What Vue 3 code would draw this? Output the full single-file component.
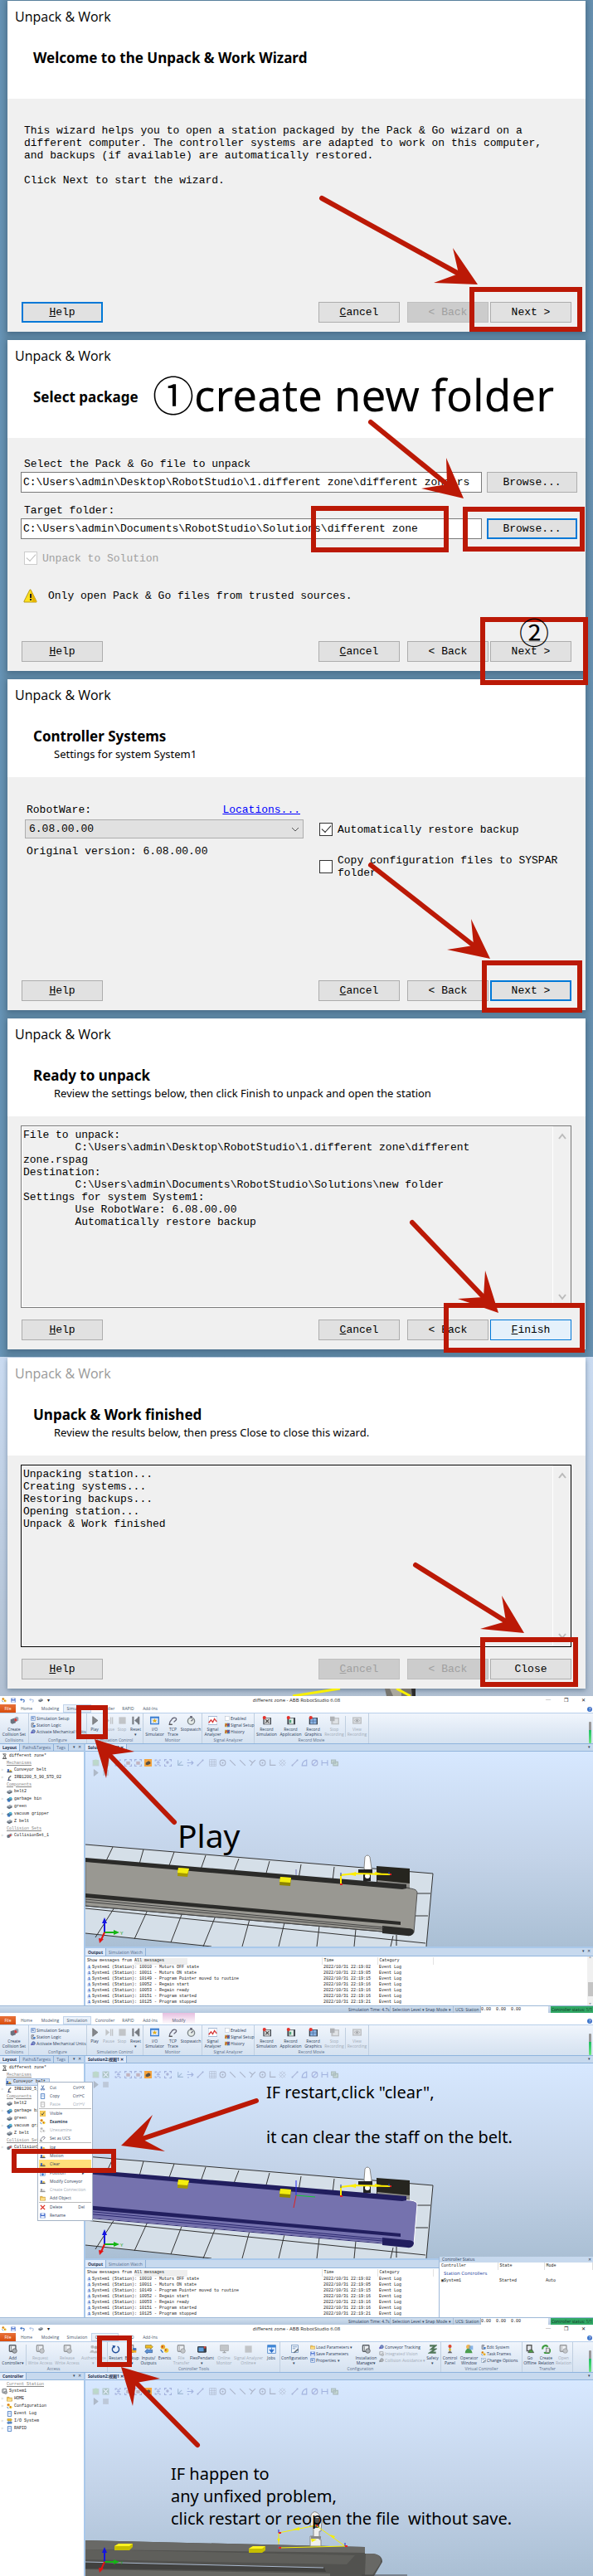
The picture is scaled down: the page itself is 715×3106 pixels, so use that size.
<script setup>
const red = '#bb1906'

const wizards = [
  {
    id: 'welcome', title: 'Welcome to the Unpack & Work Wizard', help: 'focus',
    buttons: [['C', 'ancel', ''], ['', '< Back', 'off'], ['', 'Next >', '']],
    boxes: [[566, 346, 702, 400]],
    arrows: [[[388, 239], [576, 343], [546, 299], [523, 341]]]
  },
  {
    id: 'package', title: 'Select package',
    buttons: [['C', 'ancel', ''], ['', '< Back', ''], ['', 'Next >', '']],
    boxes: [[375, 201, 541, 257], [558, 202, 705, 256], [579, 335, 709, 417]],
    arrows: [[[447, 100], [559, 192], [538, 143], [508, 180]]]
  },
  {
    id: 'systems', title: 'Controller Systems', sub: 'Settings for system System1',
    buttons: [['C', 'ancel', ''], ['', '< Back', ''], ['', 'Next >', 'focus']],
    boxes: [[581, 340, 702, 403]],
    arrows: [[[447, 225], [591, 338], [568, 290], [539, 327]]]
  },
  {
    id: 'ready', title: 'Ready to unpack', sub: 'Review the settings below, then click Finish to unpack and open the station',
    log: 'File to unpack:\n        C:\\Users\\admin\\Desktop\\RobotStudio\\1.different zone\\different\nzone.rspag\nDestination:\n        C:\\Users\\admin\\Documents\\RobotStudio\\Solutions\\new folder\nSettings for system System1:\n        Use RobotWare: 6.08.00.00\n        Automatically restore backup',
    buttons: [['C', 'ancel', ''], ['', '< Back', ''], ['F', 'inish', 'hot']],
    boxes: [[535, 344, 705, 404]],
    arrows: [[[497, 247], [601, 356], [585, 305], [552, 339]]]
  },
  {
    id: 'done', title: 'Unpack & Work finished', sub: 'Review the results below, then press Close to close this wizard.',
    log: 'Unpacking station...\nCreating systems...\nRestoring backups...\nOpening station...\nUnpack & Work finished',
    buttons: [['C', 'ancel', 'off'], ['', '< Back', 'off'], ['', 'Close', '']],
    boxes: [[579, 338, 697, 398]],
    arrows: [[[501, 251], [632, 333], [605, 288], [579, 328]]]
  }
]

// Head polygon: tip, first barb, notch behind the tip, second barb.
function head([tail, tip, b1, b2]) {
  const n = notch([tail, tip, b1, b2])
  return [tip, b1, n, b2].map(p => p.join(',')).join(' ')
}
function notch([tail, tip]) {
  const dx = tail[0] - tip[0], dy = tail[1] - tip[1]
  const len = Math.hypot(dx, dy)
  return [Math.round(tip[0] + dx / len * 26), Math.round(tip[1] + dy / len * 26)]
}

const simRibbon = [
  { name: 'Collisions', items: [{ w: 34, i: 'collide', t: 'Create\nCollision Set' }] },
  { name: 'Configure', items: [{ w: 69, list: [['setup', 'Simulation Setup'], ['logic', 'Station Logic'], ['mech', 'Activate Mechanical Units']] }] },
  { name: 'Simulation Control', items: [{ w: 18, i: 'play', t: 'Play' }, { w: 16, i: 'pause', t: 'Pause', off: 1 }, { w: 16, i: 'stop', t: 'Stop', off: 1 }, { w: 17, i: 'reset', t: 'Reset\n▾' }] },
  { name: 'Monitor', items: [{ w: 27, i: 'io', t: 'I/O\nSimulator' }, { w: 17, i: 'trace', t: 'TCP\nTrace' }, { w: 26, i: 'watch', t: 'Stopwatch' }] },
  { name: 'Signal Analyzer', items: [{ w: 25, i: 'chart', t: 'Signal\nAnalyzer' }, { w: 37, list: [['check', 'Enabled'], ['sig', 'Signal Setup'], ['sig', 'History']] }] },
  { name: 'Record Movie', items: [{ w: 29, i: 'rec', t: 'Record\nSimulation' }, { w: 29, i: 'recapp', t: 'Record\nApplication' }, { w: 25, i: 'recgfx', t: 'Record\nGraphics' }, { w: 26, i: 'recstop', t: 'Stop\nRecording', off: 1 }, { w: 28, i: 'view', t: 'View\nRecording', off: 1, div: 1 }] }
]
const ctlRibbon = [
  { name: 'Access', items: [{ w: 31, i: 'cab', t: 'Add\nController▾' }, { w: 34, i: 'cab', t: 'Request\nWrite Access', off: 1, div: 1 }, { w: 32, i: 'cab', t: 'Release\nWrite Access', off: 1 }, { w: 32, i: 'people', t: 'Authenticate\n▾', off: 1 }] },
  { name: 'Controller Tools', items: [{ w: 19, i: 'restart', t: 'Restart\n▾' }, { w: 20, i: 'backup', t: 'Backup\n▾' }, { w: 20, i: 'inout', t: 'Inputs/\nOutputs' }, { w: 19, i: 'event', t: 'Events' }, { w: 21, i: 'cab', t: 'File\nTransfer', off: 1 }, { w: 29, i: 'pendant', t: 'FlexPendant\n▾' }, { w: 24, i: 'screen', t: 'Online\nMonitor', off: 1 }, { w: 35, i: 'stop', t: 'Signal Analyzer\nOnline▾', off: 1 }, { w: 20, i: 'jobs', t: 'Jobs' }] },
  { name: 'Configuration', items: [{ w: 34, i: 'config', t: 'Configuration\n▾' }, { w: 56, list: [['folder', 'Load Parameters ▾'], ['save', 'Save Parameters'], ['setup', 'Properties ▾']] }, { w: 27, i: 'cab', t: 'Installation\nManager▾' }, { w: 57, list: [['mech', 'Conveyor Tracking'], ['cab', 'Integrated Vision', 1], ['mech', 'Collision Avoidance ▾', 1]] }, { w: 19, i: 'safety', t: 'Safety\n▾' }] },
  { name: 'Virtual Controller', items: [{ w: 21, i: 'light', t: 'Control\nPanel' }, { w: 25, i: 'person', t: 'Operator\nWindow' }, { w: 51, list: [['logic', 'Edit System'], ['event', 'Task Frames'], ['config', 'Change Options']] }] },
  { name: 'Transfer', items: [{ w: 18, i: 'offline', t: 'Go\nOffline' }, { w: 21, i: 'relation', t: 'Create\nRelation' }, { w: 21, i: 'cab', t: 'Open\nRelation', off: 1 }] }
]

const stationTree = [
  ['root', 'station', 'different zone*'], ['head', '', 'Mechanisms'],
  ['open', 'belt', 'Conveyor belt'], ['open', 'robot', 'IRB1200_5_90_STD_02'],
  ['head', '', 'Components'], ['leaf', 'part', 'belt2'], ['open', 'group', 'garbage bin'],
  ['leaf', 'part', 'green'], ['open', 'group', 'vacuum gripper'], ['leaf', 'part', 'Z belt'],
  ['head', '', 'Collision Sets'], ['open', 'collide', 'CollisionSet_1']
]
const controllerTree = [
  ['head', '', 'Current Station'], ['root', 'cab', 'System1'], ['open', 'folder', 'HOME'],
  ['open', 'event', 'Configuration'], ['leaf', 'page', 'Event Log'], ['open', 'inout', 'I/O System'], ['open', 'page', 'RAPID']
]

const tabs = ['Home', 'Modeling', 'Simulation', 'Controller', 'RAPID', 'Add-Ins']
const frames = [
  {
    id: 'play', title: true, active: 'Simulation', ribbon: simRibbon, tree: stationTree, dock: ['Layout', 'Paths&Targets', 'Tags'], scene: 'grey',
    boxes: [[92, 11, 130, 52]], arrows: [[[210, 152], [114, 52], [128, 99], [162, 67]]], h: 382
  },
  {
    id: 'clear', title: false, active: 'Simulation', modify: true, ribbon: simRibbon, tree: stationTree, dock: ['Layout', 'Paths&Targets', 'Tags'], scene: 'blue', menu: true, status: true,
    boxes: [[14, 164, 140, 193]], arrows: [[[309, 106], [146, 160], [184, 123], [199, 167]]], h: 376
  },
  {
    id: 'restart', title: true, active: 'Controller', ribbon: ctlRibbon, tree: controllerTree, dock: ['Controller'], scene: 'near',
    boxes: [[117, 13, 159, 51]], arrows: [[[238, 145], [146, 51], [160, 98], [193, 65]]], h: 303
  }
]

const log = [
  ['10010 - Motors OFF state', '02'], ['10011 - Motors ON state', '05'], ['10149 - Program Pointer moved to routine', '15'],
  ['10052 - Regain start', '16'], ['10053 - Regain ready', '16'], ['10151 - Program started', '16'], ['10125 - Program stopped', '21']
]
const menu = [
  ['Cut', 'Ctrl+X', 'cut'], ['Copy', 'Ctrl+C', 'page'], ['Paste', 'Ctrl+V', 'page', 'off'], null,
  ['Visible', '', 'tick'], ['Examine', '', 'event', 'bold'], ['Unexamine', '', 'event', 'off'], ['Set as UCS', '', 'trace'], null,
  ['Jog', '', 'belt'], ['Motion', '', 'belt'], ['Clear', '', 'belt', 'hot'], null,
  ['Position', '▸', 'jobs'], ['Modify Conveyor', '', 'belt'], ['Create Connection', '', 'belt', 'off'], ['Add Object', '', 'folder'], null,
  ['Delete', 'Del', 'del'], ['Rename', '', 'save']
]
const tools = [
  ['sphere', 'fit'], ['sel', 'selred', 'selred', 'orange', 'sel', 'selblue'], ['axes', 'arrow', 'diag'],
  ['grid', 'target', 'slash', 'slash', 'yy', 'target', 'corner', 'cross'], ['diag', 'arc', 'nosign', 'width', 'cards']
]
const gridTop = [[33, 115, 20, 142], [70, 118, 62, 146], [107, 121, 100, 140], [145, 125, 138, 145], [185, 129, 178, 147], [222, 132, 217, 150], [260, 136, 257, 153], [300, 139, 298, 156]]
const gridLow = [[35, 188, 12, 224], [75, 191, 59, 226], [117, 194, 103, 230], [157, 198, 142, 235], [198, 202, 189, 235], [240, 206, 233, 235], [282, 210, 279, 235], [326, 214, 324, 235], [371, 222, 368, 235]]
</script>

<template>
  <main class="guide">
    <svg class="defs" aria-hidden="true">
      <symbol id="i-collide" viewBox="0 0 16 16"><path d="M1 6l6-2 3 2v6l-6 2-3-2z" fill="#6b7480" /><path d="M8 3l4-2 3 2v5l-4 2-3-2z" fill="#9aa7b5" /><path d="M8 4l4 1v4l-4 0z" fill="#d83a3a" /></symbol>
      <symbol id="i-setup" viewBox="0 0 16 16"><rect x="1" y="1" width="14" height="14" fill="#5b86cc" /><rect x="3" y="4" width="10" height="9" fill="#fff" /><path d="M4 6h5M4 9h7" stroke="#335ca5" stroke-width="2" /></symbol>
      <symbol id="i-logic" viewBox="0 0 16 16"><path d="M3 2h7l-3 5 5 7H3z" fill="#dfe4ea" stroke="#556" stroke-width="2" /><rect x="9" y="8" width="6" height="6" fill="#3f7bd0" /></symbol>
      <symbol id="i-mech" viewBox="0 0 16 16"><circle cx="9" cy="7" r="5" fill="#8397c8" stroke="#3850a0" stroke-width="2" /><path d="M1 14V7l7 4z" fill="#5343b6" /></symbol>
      <symbol id="i-play" viewBox="0 0 16 16"><path d="M4 1l9 7-9 7z" fill="#85888d" stroke="#666" /></symbol>
      <symbol id="i-pause" viewBox="0 0 16 16"><path d="M2 2l7 6-7 6z" fill="#a4a8ae" /><path d="M10 2h2v12h-2zM13 2h2v12h-2z" fill="#a4a8ae" /></symbol>
      <symbol id="i-stop" viewBox="0 0 16 16"><rect x="2" y="2" width="12" height="12" fill="#a3a8b0" /></symbol>
      <symbol id="i-reset" viewBox="0 0 16 16"><path d="M2 1h3v14H2zM14 1v14L6 8zM12 1h3v14h-3z" fill="#777b82" /></symbol>
      <symbol id="i-io" viewBox="0 0 16 16"><rect y="1" width="16" height="14" fill="#3c7ed0" /><rect x="2" y="4" width="12" height="9" fill="#dceaff" /><path d="M8 4l1 3h3l-2 2 1 3-3-2-3 2 1-3-2-2h3z" fill="#e3b01b" /></symbol>
      <symbol id="i-trace" viewBox="0 0 16 16"><path d="M2 15c0-8 3-6 4-9s7-4 8-1-4 4-4 6" fill="none" stroke="#667" stroke-width="2" /><path d="M1 15h6" stroke="#555" stroke-width="2" /></symbol>
      <symbol id="i-watch" viewBox="0 0 16 16"><circle cx="8" cy="9" r="6" fill="#e5ebe8" stroke="#7c8588" stroke-width="2" /><path d="M6 1h4M8 1v3M8 9l3-3" stroke="#667" stroke-width="2" /></symbol>
      <symbol id="i-chart" viewBox="0 0 16 16"><rect y="1" width="16" height="14" fill="#fff" stroke="#7f9cc3" /><path d="M1 12l4-5 3 4 3-6 4 5" fill="none" stroke="#d63a3a" stroke-width="2" /></symbol>
      <symbol id="i-check" viewBox="0 0 16 16"><rect x="1" y="1" width="14" height="14" fill="#fff" stroke="#9aa8ba" /></symbol>
      <symbol id="i-sig" viewBox="0 0 16 16"><rect y="2" width="10" height="12" fill="#c3a94c" /><rect x="8" y="2" width="8" height="12" fill="#477bbd" /><path d="M1 12l5-8 4 6 4-7" fill="none" stroke="#c22" stroke-width="2" /></symbol>
      <symbol id="i-rec" viewBox="0 0 16 16"><rect x="2" y="3" width="14" height="12" fill="#444a52" /><rect x="4" y="4" width="10" height="10" fill="#e5e5e5" /><path d="M6 12l6-6M6 6l6 6" stroke="#555" stroke-width="2" /><circle cx="4" cy="3" r="3" fill="#e4312b" /></symbol>
      <symbol id="i-recapp" viewBox="0 0 16 16"><rect x="2" y="3" width="14" height="12" fill="#444a52" /><rect x="5" y="4" width="8" height="10" fill="#dfece7" /><path d="M6 7h3v5H6z" fill="#48a277" /><circle cx="4" cy="3" r="3" fill="#e4312b" /></symbol>
      <symbol id="i-recgfx" viewBox="0 0 16 16"><rect x="1" y="3" width="15" height="12" fill="#37404c" /><rect x="3" y="4" width="11" height="10" fill="#8ab3e4" /><path d="M3 9h11M8 4v10" stroke="#496a99" /><circle cx="4" cy="3" r="3" fill="#e4312b" /></symbol>
      <symbol id="i-recstop" viewBox="0 0 16 16"><rect x="2" y="3" width="14" height="12" fill="#9fa4ab" /><rect x="5" y="5" width="9" height="8" fill="#d8dce0" /><rect y="1" width="8" height="8" fill="#858a91" /></symbol>
      <symbol id="i-view" viewBox="0 0 16 16"><rect y="2" width="16" height="12" fill="#9da2a9" /><rect x="2" y="4" width="12" height="8" fill="#d3d7dc" /><path d="M3 8q5-5 10 0q-5 5-10 0" fill="none" stroke="#70757b" /><circle cx="8" cy="8" r="2" fill="#70757b" /></symbol>
      <symbol id="i-cab" viewBox="0 0 16 16"><rect x="2" y="1" width="11" height="11" rx="1" fill="#eceff2" stroke="#5b6168" stroke-width="2" /><path d="M5 3v8" stroke="#5b6168" /><circle cx="11" cy="11" r="4" fill="#a7adb3" stroke="#555" /></symbol>
      <symbol id="i-people" viewBox="0 0 16 16"><circle cx="5" cy="4" r="3" fill="#999" /><circle cx="11" cy="5" r="3" fill="#888" /><path d="M0 14q5-9 9 0zM7 15q4-9 9 0z" fill="#999" /></symbol>
      <symbol id="i-restart" viewBox="0 0 16 16"><path d="M5 3a6 6 0 1 0 6 0" fill="none" stroke="#24509b" stroke-width="2" /><path d="M2 1l6 1-3 5z" fill="#24509b" /></symbol>
      <symbol id="i-backup" viewBox="0 0 16 16"><rect x="1" y="1" width="9" height="13" fill="#d9dde2" stroke="#555" /><path d="M7 8h8v6H7z" fill="#eea725" /><path d="M9 6h6v4H9z" fill="#3d73c2" /></symbol>
      <symbol id="i-inout" viewBox="0 0 16 16"><path d="M2 1h9V0l4 4-4 4V6H2z" fill="#f0bd25" stroke="#8c7324" /><path d="M14 9H5V8l-4 4 4 4v-2h9z" fill="#5d92d6" stroke="#375d96" /></symbol>
      <symbol id="i-event" viewBox="0 0 16 16"><circle cx="5" cy="4" r="4" fill="#ecae2c" /><circle cx="11" cy="10" r="4" fill="#f1cb35" /><path d="M4 2v3M10 8v3" stroke="#b32222" stroke-width="2" /><path d="M1 9l4 5" stroke="#316cb2" stroke-width="2" /></symbol>
      <symbol id="i-pendant" viewBox="0 0 16 16"><rect y="3" width="16" height="11" rx="2" fill="#39414a" /><rect x="2" y="5" width="9" height="7" fill="#5b9ddd" /><circle cx="13" cy="5" r="2" fill="#d3483c" /></symbol>
      <symbol id="i-screen" viewBox="0 0 16 16"><rect x="1" y="1" width="14" height="10" fill="#a4a9af" stroke="#777" /><path d="M5 14h6M8 11v3" stroke="#777" stroke-width="2" /></symbol>
      <symbol id="i-jobs" viewBox="0 0 16 16"><rect x="1" y="1" width="14" height="14" fill="#e3efff" stroke="#3675c0" /><path d="M1 1h14v4H1z" fill="#3e86d8" /><path d="M8 5v6M4 9l4 5 4-5z" fill="#2e70c7" stroke="#2e70c7" /></symbol>
      <symbol id="i-config" viewBox="0 0 16 16"><rect x="2" y="1" width="12" height="13" fill="#f3f7fb" stroke="#5f84b5" /><path d="M4 4h8M4 7h5" stroke="#4d78b1" /><path d="M5 14l8-7 2 2-8 6z" fill="#68747f" /></symbol>
      <symbol id="i-folder" viewBox="0 0 16 16"><path d="M1 3h6l1 2h7v9H1z" fill="#efbd47" stroke="#a97e21" /><path d="M3 7h12l-2 7H2z" fill="#fbdc85" /></symbol>
      <symbol id="i-save" viewBox="0 0 16 16"><rect x="1" y="1" width="14" height="14" rx="1" fill="#4169c8" /><path d="M4 1h8v5H4zM3 9h10v6H3z" fill="#eaf1ff" /></symbol>
      <symbol id="i-safety" viewBox="0 0 16 16"><path d="M3 2h10L6 8h7L4 14h10" fill="none" stroke="#52775a" stroke-width="3" /></symbol>
      <symbol id="i-light" viewBox="0 0 16 16"><circle cx="8" cy="3" r="3" fill="#e0452c" /><path d="M7 5h2v7H7z" fill="#777" /><circle cx="8" cy="9" r="2" fill="#e8c62c" /><path d="M4 15h8l-2-3H6z" fill="#666" /></symbol>
      <symbol id="i-person" viewBox="0 0 16 16"><circle cx="7" cy="4" r="4" fill="#efb552" /><path d="M1 15q1-8 6-8t7 8z" fill="#4b9d4d" /><rect x="8" y="2" width="7" height="7" fill="#5e9be0" opacity=".7" /></symbol>
      <symbol id="i-offline" viewBox="0 0 16 16"><rect x="2" y="1" width="8" height="10" fill="#e2e5e9" stroke="#555" stroke-width="2" /><path d="M4 14h10l-3-5H7z" fill="#4c9c45" stroke="#444" /></symbol>
      <symbol id="i-relation" viewBox="0 0 16 16"><path d="M2 8a5 5 0 0 1 9-4M14 8a5 5 0 0 1-9 5" fill="none" stroke="#3c9a3b" stroke-width="3" /><rect x="8" y="6" width="6" height="8" fill="#ddd" stroke="#666" /></symbol>
      <symbol id="i-station" viewBox="0 0 16 16"><path d="M3 2h9M5 2l3 5-4 7h8L9 7l3-4M2 15h12" fill="none" stroke="#555" stroke-width="2" /></symbol>
      <symbol id="i-belt" viewBox="0 0 16 16"><path d="M1 11h14v3H1z" fill="#47505f" /><path d="M2 5h5v6H2z" fill="#3a63ba" /><path d="M8 7h5v4H8z" fill="#e0b12c" /></symbol>
      <symbol id="i-robot" viewBox="0 0 16 16"><path d="M3 15h9M6 14V8l6-5" fill="none" stroke="#666" stroke-width="3" /><path d="M4 12h3v3H4z" fill="#334fb0" /></symbol>
      <symbol id="i-part" viewBox="0 0 16 16"><path d="M1 7l8-4 6 2v5l-8 4-6-3z" fill="#66707c" /><path d="M1 7l8-4 6 2-8 4z" fill="#a9b2bc" /></symbol>
      <symbol id="i-group" viewBox="0 0 16 16"><path d="M1 7l8-4 6 2v5l-8 4-6-3z" fill="#4f7391" /><path d="M7 2h7v6H7z" fill="#54b6d5" /><path d="M3 9h6v6H3z" fill="#3a77c2" /></symbol>
      <symbol id="i-page" viewBox="0 0 16 16"><path d="M3 1h10v14H3z" fill="#eaf2ff" stroke="#4e7fc2" stroke-width="2" /><path d="M5 5h6M5 8h6" stroke="#87a6d0" /></symbol>
      <symbol id="i-cut" viewBox="0 0 16 16"><path d="M5 1l4 9M11 1l-4 9" stroke="#456aa9" stroke-width="2" /><circle cx="5" cy="12" r="2" fill="none" stroke="#456aa9" stroke-width="2" /><circle cx="11" cy="12" r="2" fill="none" stroke="#456aa9" stroke-width="2" /></symbol>
      <symbol id="i-tick" viewBox="0 0 16 16"><rect width="16" height="16" fill="#fcd364" stroke="#dba52f" /><path d="M4 8l3 4 5-8" fill="none" stroke="#443" stroke-width="2" /></symbol>
      <symbol id="i-del" viewBox="0 0 16 16"><path d="M2 2l12 12M14 2L2 14" stroke="#dc2a1e" stroke-width="3" /></symbol>
      <symbol id="i-sphere" viewBox="0 0 16 16"><rect x="1" y="2" width="14" height="13" fill="#aab4a8" /><circle cx="8" cy="7" r="6" fill="#9fc98f" /></symbol>
      <symbol id="i-fit" viewBox="0 0 16 16"><rect x="1" y="1" width="14" height="14" fill="#7b9b80" /><path d="M3 3l10 10M13 3L3 13" stroke="#fff" stroke-width="2" /></symbol>
      <symbol id="i-sel" viewBox="0 0 16 16"><path d="M2 5V2h4M10 2h4M2 11v3h4M10 14h4M5 8h7M6 5h5M6 11h5" fill="none" stroke="#6872b8" stroke-width="2" /></symbol>
      <symbol id="i-selred" viewBox="0 0 16 16"><path d="M1 5V1h4M11 1h4v4M1 11v4h4M11 15h4v-4" fill="none" stroke="#6872b8" stroke-width="2" /><path d="M4 5h8v7H4z" fill="#a77" /></symbol>
      <symbol id="i-selblue" viewBox="0 0 16 16"><path d="M1 5V1h4M11 1h4v4M1 11v4h4M11 15h4v-4" fill="none" stroke="#6872b8" stroke-width="2" /><circle cx="7" cy="7" r="3" fill="#77a" /></symbol>
      <symbol id="i-orange" viewBox="0 0 16 16"><rect width="16" height="16" fill="#f5a33c" /><path d="M3 8l6-4 4 2v4l-6 3-4-1z" fill="#5a5145" /></symbol>
      <symbol id="i-axes" viewBox="0 0 16 16"><path d="M3 2v11h11M3 13l8-8" fill="none" stroke="#68a" stroke-width="2" /></symbol>
      <symbol id="i-arrow" viewBox="0 0 16 16"><path d="M1 8h13M10 4l4 4-4 4M2 2h3M2 14h3" fill="none" stroke="#67b" stroke-width="2" /></symbol>
      <symbol id="i-diag" viewBox="0 0 16 16"><path d="M2 14L14 2" stroke="#77a" stroke-width="2" /><path d="M1 12h3v3H1zM12 1h3v3h-3z" fill="#67a" /></symbol>
      <symbol id="i-grid" viewBox="0 0 16 16"><path d="M1 1h14v14H1zM6 1v14M11 1v14M1 6h14M1 11h14" fill="none" stroke="#778" stroke-width="1" /></symbol>
      <symbol id="i-target" viewBox="0 0 16 16"><circle cx="8" cy="8" r="6" fill="none" stroke="#778" stroke-width="2" /><circle cx="8" cy="8" r="2" fill="#778" /></symbol>
      <symbol id="i-slash" viewBox="0 0 16 16"><path d="M2 2l12 12" stroke="#778" stroke-width="2" /></symbol>
      <symbol id="i-yy" viewBox="0 0 16 16"><path d="M1 2l7 6 6-6M8 8l-4 6" fill="none" stroke="#778" stroke-width="2" /></symbol>
      <symbol id="i-corner" viewBox="0 0 16 16"><path d="M3 1v12h12" fill="none" stroke="#778" stroke-width="2" /></symbol>
      <symbol id="i-cross" viewBox="0 0 16 16"><path d="M2 2l12 12M14 2L2 14M8 1l7 7-7 7-7-7z" fill="none" stroke="#778" stroke-width="1" /></symbol>
      <symbol id="i-arc" viewBox="0 0 16 16"><path d="M2 14Q3 4 12 2v12z" fill="none" stroke="#67b" stroke-width="2" /></symbol>
      <symbol id="i-nosign" viewBox="0 0 16 16"><circle cx="8" cy="8" r="6" fill="none" stroke="#77a" stroke-width="2" /><path d="M3 13L13 3" stroke="#67c" stroke-width="2" /></symbol>
      <symbol id="i-width" viewBox="0 0 16 16"><path d="M2 2v12M14 2v12M2 8h12" stroke="#67b" stroke-width="2" /></symbol>
      <symbol id="i-cards" viewBox="0 0 16 16"><path d="M1 2h9v7H1zM5 6h10v8H5z" fill="#b7cba6" stroke="#7a8b76" stroke-width="2" /></symbol>
      <symbol id="i-undo" viewBox="0 0 16 16"><path d="M4 6h6q4 0 4 4t-4 4" fill="none" stroke="#3c6fc0" stroke-width="3" /><path d="M0 6l6-5v10z" fill="#3c6fc0" /></symbol>
    </svg>

    <section v-for="w in wizards" :key="w.id" class="stage" :class="'stage-' + w.id">
      <div class="window">
        <header class="head">
          <p class="caption">Unpack &amp; Work</p>
          <h2>{{ w.title }}</h2>
          <p v-if="w.sub" class="sub">{{ w.sub }}</p>
        </header>
        <div class="body">
          <div v-if="w.id === 'welcome'" class="intro">
            <p>This wizard helps you to open a station packaged by the Pack &amp; Go wizard on a<br>different computer. The controller systems are adapted to work on this computer,<br>and backups (if available) are automatically restored.</p>
            <p>Click Next to start the wizard.</p>
          </div>

          <div v-else-if="w.id === 'package'" class="pick">
            <label for="src">Select the Pack &amp; Go file to unpack</label>
            <div class="row">
              <input id="src" type="text" value="C:\Users\admin\Desktop\RobotStudio\1.different zone\different zone.rs">
              <button type="button" class="btn">Browse...</button>
            </div>
            <label for="dst">Target folder:</label>
            <div class="row">
              <input id="dst" type="text" value="C:\Users\admin\Documents\RobotStudio\Solutions\different zone">
              <button type="button" class="btn focus">Browse...</button>
            </div>
            <label class="tick off"><input type="checkbox" checked disabled>Unpack to Solution</label>
            <p class="warn">
              <svg viewBox="0 0 17 17" width="17" height="17" aria-hidden="true"><path d="M8 1h1l7 14v1H1v-1z" fill="#ffe11c" stroke="#b59a1c" stroke-linejoin="round" /><path d="M9 1l7 14v1h-5z" fill="#e6b400" /><path d="M8 6h2v5H8zM8 12h2v2H8z" fill="#222" /></svg>
              Only open Pack &amp; Go files from trusted sources.
            </p>
          </div>

          <div v-else-if="w.id === 'systems'" class="systems">
            <div class="left">
              <div class="line"><label for="rw">RobotWare:</label><a href="#">Locations...</a></div>
              <div class="select">
                <select id="rw"><option>6.08.00.00</option></select>
                <svg viewBox="0 0 10 6" width="10" height="6" aria-hidden="true"><path d="M1 1l4 4 4-4" fill="none" stroke="#555" /></svg>
              </div>
              <p>Original version: 6.08.00.00</p>
            </div>
            <div class="right">
              <label class="tick"><input type="checkbox" checked>Automatically restore backup</label>
              <label class="tick"><input type="checkbox"><span>Copy configuration files to SYSPAR<br>folder</span></label>
            </div>
          </div>

          <div v-else class="log" :class="{ dark: w.id === 'done' }">
            <textarea readonly :value="w.log" :aria-label="w.title"></textarea>
            <div class="bar">
              <svg viewBox="0 0 10 8" width="10" height="8" aria-hidden="true"><path d="M1 7l4-5 4 5" fill="none" stroke="#bbb" stroke-width="2" /></svg>
              <svg viewBox="0 0 10 8" width="10" height="8" aria-hidden="true"><path d="M1 1l4 5 4-5" fill="none" stroke="#bbb" stroke-width="2" /></svg>
            </div>
          </div>

          <footer class="actions">
            <button type="button" class="btn help" :class="w.help"><u>H</u>elp</button>
            <button v-for="b in w.buttons" :key="b[1]" type="button" class="btn" :class="b[2]" :disabled="b[2] === 'off'"><u>{{ b[0] }}</u>{{ b[1] }}</button>
          </footer>
        </div>
      </div>
      <svg v-if="w.id === 'done'" class="peek" viewBox="0 0 715 9" preserveAspectRatio="none" aria-hidden="true">
        <path d="M464 0h37v9h-35z" fill="#77756f" /><path d="M496 0h5v9h-4z" fill="#2b2b2b" /><path d="M470 0h14v9h-10z" fill="#aaa89f" />
        <path d="M410 0l-57 9M478 0l17 9" stroke="#f8f000" stroke-width="3" />
      </svg>
      <svg class="marks" viewBox="0 0 715 409" preserveAspectRatio="none" aria-hidden="true">
        <rect v-for="b in w.boxes" :key="b[0]" :x="b[0] + 3" :y="b[1] + 3" :width="b[2] - b[0] - 6" :height="b[3] - b[1] - 6" fill="none" :stroke="red" stroke-width="6" />
        <g v-for="a in w.arrows" :key="a[0][0]">
          <line :x1="a[0][0]" :y1="a[0][1]" :x2="notch(a)[0]" :y2="notch(a)[1]" :stroke="red" stroke-width="6" stroke-linecap="round" />
          <polygon :points="head(a)" :fill="red" />
        </g>
      </svg>
      <template v-if="w.id === 'package'">
        <p class="note note-new"><span>①</span>create new folder</p>
        <p class="note note-two">②</p>
      </template>
    </section>

    <section v-for="f in frames" :key="f.id" class="studio" :class="'studio-' + f.id">
      <div v-if="f.title" class="titlebar">
        <div class="quick">
          <svg v-for="(q, n) in ['event', 'save', 'undo', 'undo', 'part']" :key="n" :class="{ faint: n === 3 }"><use :href="'#i-' + q" /></svg><span>▾</span>
        </div>
        <span>different zone - ABB RobotStudio 6.08</span>
        <div class="sys"><i>─</i><i>❐</i><i>✕</i></div>
      </div>
      <nav class="tabs">
        <button type="button" class="file">File</button>
        <button v-for="t in tabs" :key="t" type="button" :class="['t-' + t.toLowerCase(), { on: f.active === t }]">{{ t }}</button>
        <button v-if="f.modify" type="button" class="modify">Modify</button>
        <span class="q">?</span>
      </nav>
      <div class="ribbon">
        <div v-for="g in f.ribbon" :key="g.name" class="group">
          <div class="items">
            <template v-for="it in g.items" :key="it.t || 'list'">
              <div v-if="it.list" class="list" :style="{ width: it.w + 'px' }">
                <button v-for="l in it.list" :key="l[1]" type="button" :class="{ off: l[2] }"><svg><use :href="'#i-' + l[0]" /></svg>{{ l[1] }}</button>
              </div>
              <button v-else type="button" class="big" :class="{ off: it.off, div: it.div }" :style="{ width: it.w + 'px' }"><svg><use :href="'#i-' + it.i" /></svg><span>{{ it.t }}</span></button>
            </template>
          </div>
          <small>{{ g.name }}</small>
        </div>
        <i class="meter"></i>
      </div>
      <div class="work">
        <aside>
          <div class="dock">
            <button v-for="(d, n) in f.dock" :key="d" type="button" :class="{ on: n === 0 }">{{ d }}</button>
            <span class="pins">▾&nbsp; ✕</span>
          </div>
          <ul class="tree">
            <li v-for="r in f.tree" :key="r[2]" :class="[r[0], { picked: f.menu && r[2] === 'Conveyor belt' }]">
              <i>{{ r[0] === 'open' ? '▷' : '' }}</i><svg v-if="r[1]"><use :href="'#i-' + r[1]" /></svg><span>{{ r[2] }}</span>
            </li>
          </ul>
          <div v-if="f.menu" class="menu">
            <template v-for="(m, n) in menu" :key="n">
              <hr v-if="!m">
              <button v-else type="button" :class="m[3]"><svg><use :href="'#i-' + m[2]" /></svg><span>{{ m[0] }}</span><kbd>{{ m[1] }}</kbd></button>
            </template>
          </div>
        </aside>
        <div class="main">
          <div class="dock view"><button type="button" class="on">Solution2:视图1 ✕</button><span class="pins">▾</span></div>
          <div class="scene">
            <svg v-if="f.scene !== 'near'" class="world" viewBox="0 0 612 235" preserveAspectRatio="none" :class="f.scene" aria-hidden="true">
              <path d="M0 112L419 147L411 235H152L0 219z" fill="#d5dfe8" />
              <path d="M0 112L419 147L411 235M0 219L152 235M0 189L410 231M395 171h21M392 198h21" fill="none" stroke="#333" stroke-width="1" />
              <line v-for="g in [...gridTop, ...gridLow]" :key="g[0] + '-' + g[1]" :x1="g[0]" :y1="g[1]" :x2="g[2]" :y2="g[3]" stroke="#333" />
              <path d="M351 138l40 3v24l-40-6z" fill="#26251f" /><path d="M352 155l39 4v5l-39-4z" fill="#8d8c88" />
              <path class="top" d="M0 132L392 165Q400 166 400 170L396 218Q394 222 388 221L358 217L0 186z" />
              <path class="rail" d="M0 128L387 160V165L382 166L0 133zM0 171L380 205V209L0 176z" />
              <path class="rail" d="M358 210l30 3q8 0 8 4q-1 6-8 5l-30-3z" />
              <path class="edge" d="M0 178L360 212M0 181L358 214M0 186L358 217" />
              <path d="M375 221v13" stroke="#222" stroke-width="1" />
              <g><path d="M112 140l13 1-2 10-12-1z" fill="#a69a00" /><path d="M112 140l13 1-2 6-12-1z" fill="#f4ee10" /><path d="M235 151l13 1-1 10-13-1z" fill="#8f8500" /><path d="M235 151l13 1-1 6-13-1z" fill="#f4ee10" /></g>
              <path d="M337 127q3-4 6 0l2 14-3 5h-5l-1-6z" fill="#fff" stroke="#888" /><path d="M329 142h17v5h-17zM335 147h9v9h-9z" fill="#222" /><circle cx="340" cy="150" r="3" fill="#fff" />
              <path d="M308 159v-10l16-2 43 1" fill="none" stroke="#ffee00" stroke-width="2" /><path d="M318 148l8-3v5zM357 147l-8-2v4z" fill="#fe0" /><path d="M308 146v4M366 145v3" stroke="#2340c0" stroke-width="1" /><path d="M307 160h3M367 148h2" stroke="#d22" stroke-width="2" />
              <g v-if="f.scene === 'blue'" fill="none"><path d="M254 141v18" stroke="#22e" /><path d="M254 159l23 2" stroke="#1c3" /><path d="M254 159l-3 15" stroke="#d22" /></g>
              <path v-else d="M254 142v7" stroke="#77b" />
            </svg>
            <svg v-else class="world" viewBox="0 0 612 236" preserveAspectRatio="none" aria-hidden="true">
              <path d="M0 193L337 201V209H346Q358 210 358 219L348 236H0z" fill="#52524f" />
              <path d="M0 193L337 201V208L0 204z" fill="#696966" /><path d="M0 204L325 211L315 222L0 216z" fill="#5f5f5b" />
              <path d="M0 219L288 226L290 231L0 227z" fill="#41413f" /><path d="M0 219L287 226" stroke="#aab9ce" />
              <path d="M0 228L295 233V236H0z" fill="#696965" />
              <path d="M338 209h9q11 2 9 11l-10 15h-9z" fill="#686865" /><path d="M333 235h55" stroke="#444" />
              <path d="M35 200l5-3h17v4l-4 4H35zM197 203l5-3h15v5l-4 3h-16z" fill="#c5bd00" /><path d="M35 200l5-3h17l-4 3zM197 203l5-3h15l-4 3z" fill="#fff321" />
              <path d="M272 162q4-7 10 0l3 8-1 12h-2v10h2v8h-13v-12h4v-12h-4z" fill="#efefed" stroke="#888" /><path d="M276 166h6v12h-6z" fill="#555" /><path d="M272 188h12v3h-12z" fill="#888" />
              <path d="M233 202V184l45-9 35 25z" fill="none" stroke="#f7ef00" /><path d="M250 180l8-3v4zM295 186l6 2-2 3zM231 191h4l-2 4zM272 191l7 1-6 3z" fill="#f7ef00" />
              <path d="M233 180v4M233 198v4M313 196v4" stroke="#22c" /><path d="M233 184h3M233 202h3M313 200h3M278 175h2" stroke="#e22" stroke-width="2" />
            </svg>
            <svg class="gizmo" viewBox="0 0 40 34" width="40" height="34" aria-hidden="true">
              <path d="M10 20V8" stroke="#1414e0" stroke-width="2" /><path d="M7 9l3-7 3 7z" fill="#1414e0" /><path d="M10 20h12" stroke="#14b414" stroke-width="2" /><path d="M21 17l7 3-7 3z" fill="#14b414" /><path d="M10 20l-4 9" stroke="#e01414" stroke-width="2" /><path d="M3 27l6 1-5 5z" fill="#e01414" />
              <text x="29" y="23" fill="#14a414" font-size="6" font-family="Open Sans, sans-serif">Y</text>
            </svg>
            <div class="tools">
              <div v-for="(g, n) in tools" :key="n"><svg v-for="(t, k) in g" :key="k" :class="{ solid: t === 'orange' }"><use :href="'#i-' + t" /></svg></div>
            </div>
            <div class="tools second"><div><svg><use href="#i-play" /></svg><svg><use href="#i-stop" /></svg></div></div>
          </div>
          <div v-if="f.scene !== 'near'" class="output">
            <div class="dock out"><button type="button" class="on">Output</button><button type="button">Simulation Watch</button><span class="pins">▾&nbsp; ✕</span></div>
            <div class="table">
              <table>
                <thead><tr><th><label>Show messages from <select><option>All messages</option></select></label></th><th>Time</th><th>Category</th><th></th></tr></thead>
                <tbody><tr v-for="l in log" :key="l[0]"><td><b>i</b>System1 (Station): {{ l[0] }}</td><td>2022/10/31 22:19:{{ l[1] }}</td><td>Event Log</td><td></td></tr></tbody>
              </table>
              <div class="scroll"><span>⌃</span><i></i><span>⌄</span></div>
            </div>
          </div>
        </div>
      </div>
      <div v-if="f.scene !== 'near'" class="statusbar">
        <span class="time">Simulation Time: 4.7s</span><span class="snap">Selection Level ▾ Snap Mode ▾</span><span class="ucs">UCS: Station</span><output>0.00&nbsp; 0.00&nbsp; 0.00</output><strong>Controller status: 1/1</strong>
      </div>
      <div v-if="f.status" class="cstatus">
        <p>Controller Status<span>✕</span></p>
        <table>
          <thead><tr><th>Controller</th><th>State</th><th>Mode</th></tr></thead>
          <tbody><tr><td colspan="3" class="sect">Station Controllers</td></tr><tr><td>▣System1</td><td>Started</td><td>Auto</td></tr></tbody>
        </table>
      </div>
      <svg class="marks" :viewBox="'0 0 715 ' + f.h" preserveAspectRatio="none" aria-hidden="true">
        <rect v-for="b in f.boxes" :key="b[0]" :x="b[0] + 3" :y="b[1] + 3" :width="b[2] - b[0] - 6" :height="b[3] - b[1] - 6" fill="none" :stroke="red" stroke-width="6" />
        <g v-for="a in f.arrows" :key="a[0][0]">
          <line :x1="a[0][0]" :y1="a[0][1]" :x2="notch(a)[0]" :y2="notch(a)[1]" :stroke="red" stroke-width="6" stroke-linecap="round" />
          <polygon :points="head(a)" :fill="red" />
        </g>
      </svg>
      <p v-if="f.id === 'play'" class="note note-play">Play</p>
      <p v-if="f.id === 'clear'" class="note note-clear">IF restart,click "clear",<br>it can clear the staff on the belt.</p>
      <p v-if="f.id === 'restart'" class="note note-restart">IF happen to<br>any unfixed problem,<br>click restart or reopen the file&nbsp; without save.</p>
    </section>
  </main>
</template>

<style>
html, body { margin: 0; background: #fff; }
</style>

<style scoped>
* { box-sizing: border-box; }
p, h2, ul { margin: 0; padding: 0; }
button, input, select, textarea { font: inherit; color: inherit; margin: 0; border-radius: 0; }
.guide { overflow: hidden; color: #000; font-family: "Open Sans", "Noto Sans CJK SC", sans-serif; }
.defs { display: block; width: 0; height: 0; }

.stage { position: relative; padding: 1px 9px 9px; background: linear-gradient(90deg, #6693b5, #5f88a5 9px, #5f88a5 706px, #6790b0); }
.stage-done { background: linear-gradient(#cbdcf2, #b2c1d3); }
.window { background: #f0f0f0; box-shadow: 0 2px 6px #2c4a6480; display: flex; flex-direction: column; }
.head { background: #fff; min-height: 118px; padding: 7px 9px 0; }
.caption { font-size: 16px; line-height: 24px; }
.stage-done .caption { color: #999; }
.head h2 { font: bold 17px/20px "Noto Sans", sans-serif; margin: 28px 0 2px 22px; }
.sub { font-size: 13px; line-height: 18px; margin-left: 47px; font-family: "Noto Sans", sans-serif; }
.body { min-height: 281px; display: flex; flex-direction: column; font: 13px/15px "Liberation Mono", monospace; }
.actions { display: flex; justify-content: flex-end; padding: 0 17px 11px; margin-top: auto; }
.btn { width: 98px; height: 25px; padding: 0; border: 1px solid #adadad; background: #e1e1e1; }
.actions .btn + .btn { margin-left: 9px; }
.actions .btn:last-child { margin-left: 2px; }
.actions .help { margin-right: auto; }
.btn.focus { border: 2px solid #0078d7; }
.btn.hot { border-color: #0078d7; background: #e5f1fb; }
.btn.off { background: #ccc; border-color: #bfbfbf; color: #a0a0a0; }

.intro { padding: 31px 20px 0; white-space: nowrap; }
.intro p + p { margin-top: 15px; }
.pick { padding: 24px 10px 0 16px; display: flex; flex-direction: column; }
.pick > label { padding-left: 4px; margin-bottom: 2px; }
.pick .row { display: grid; grid-template-columns: 1fr 109px; gap: 6px; margin-bottom: 14px; }
.row input { height: 25px; min-width: 0; border: 1px solid #7a7a7a; background: #fff; padding: 0 2px; }
.row .btn { width: auto; }
.tick { display: flex; align-items: center; gap: 6px; }
.tick input { appearance: none; width: 16px; height: 16px; flex: none; border: 1px solid #333; background: #fff; display: grid; place-items: center; }
.tick input:checked::after { content: ""; width: 10px; height: 5px; border-left: 1px solid #222; border-bottom: 1px solid #222; transform: rotate(-48deg); margin-bottom: 4px; }
.tick.off { color: #a0a0a0; margin-top: 1px; }
.tick.off input { border-color: #ccc; }
.tick.off input::after { border-color: #bbb; }
.warn { display: flex; align-items: center; gap: 13px; margin-top: 27px; padding-left: 3px; }
.systems { display: grid; grid-template-columns: 336px 1fr; gap: 19px; padding: 32px 10px 0 21px; }
.line { display: flex; justify-content: space-between; padding: 0 4px 0 2px; margin-bottom: 4px; }
.line a { color: #00f; }
.select { position: relative; }
.select select { appearance: none; width: 100%; height: 23px; border: 1px solid #adadad; background: #e1e1e1; padding: 0 4px; }
.select svg { position: absolute; right: 5px; top: 9px; }
.left p { margin: 8px 2px; }
.right { display: flex; flex-direction: column; gap: 22px; padding-top: 23px; white-space: nowrap; }
.log { flex: 1; display: flex; margin: 11px 17px 14px 16px; border: 1px solid #7a7a7a; }
.log.dark { border-color: #000; }
.log textarea { flex: 1; border: 1px solid #fff; background: none; resize: none; padding: 2px 1px; white-space: pre; overflow: hidden; outline: 0; }
.bar { width: 21px; display: flex; flex-direction: column; justify-content: space-between; align-items: center; padding: 8px 0; }
.peek { position: absolute; left: 0; bottom: 0; width: 100%; height: 9px; }
.marks { position: absolute; inset: 0; width: 100%; height: 100%; overflow: visible; pointer-events: none; z-index: 3; }
.note { position: absolute; z-index: 4; white-space: nowrap; color: #000; font-family: "Noto Sans", "Noto Sans CJK SC", sans-serif; }
.note-new { left: 184px; top: 30px; font-size: 53px; line-height: 70px; }
.note-new span { font-family: "Noto Sans CJK SC", sans-serif; font-size: 50px; }
.note-two { left: 626px; top: 334px; font: 36px/36px "Noto Sans CJK SC", sans-serif; }
.note-play { left: 214px; top: 142px; font-size: 39px; line-height: 52px; }
.note-clear { left: 321px; top: 69px; font-size: 20px; line-height: 54px; }
.note-restart { left: 206px; top: 166px; font-size: 20px; line-height: 27px; }

.studio { position: relative; font-size: 5px; line-height: 6px; color: #2d3d58; background: #c9daee; }
.studio button { border: 0; background: none; padding: 0; white-space: nowrap; }
.titlebar { display: grid; grid-template-columns: 1fr auto 1fr; align-items: center; height: 10px; background: #fff; color: #222; font-size: 6px; line-height: 10px; }
.quick { display: flex; align-items: center; gap: 5px; padding-left: 2px; }
.quick svg { width: 6px; height: 6px; }
.quick .faint { opacity: .4; }
.sys { display: flex; justify-content: flex-end; gap: 16px; padding-right: 9px; }
.sys i { font-style: normal; }
.tabs { display: flex; height: 11px; background: #fff; border-bottom: 1px solid #b8cfea; }
.studio .tabs button { width: 33px; color: #47556b; }
.tabs .t-home { flex: 0 0 26px; }
.tabs .t-modeling { flex: 0 0 31px; }
.tabs .t-simulation { flex: 0 0 34px; }
.tabs .t-rapid { flex: 0 0 23px; }
.tabs .t-add-ins { flex: 0 0 30px; }
.studio .tabs .on { background: #eaf1fa; box-shadow: inset 0 0 0 1px #c2d4ea; }
.studio .tabs .file { flex: 0 0 19px; color: #fff; background: linear-gradient(#e8723a, #d94c0c); }
.studio .tabs .modify { flex: 0 0 39px; background: linear-gradient(#e7bfe0, #fff); }
.q { margin: 3px 1px 0 auto; width: 6px; height: 6px; border-radius: 50%; background: #3e73ca; color: #fff; text-align: center; }
.studio-clear .tabs { height: 15px; padding-top: 4px; }
.studio-clear .tabs .modify { margin-top: -4px; height: 14px; padding-top: 4px; }
.ribbon { position: relative; display: flex; height: 36px; background: linear-gradient(#f0f5fc, #dfe9f5 60%, #d5e2f0); }
.group { border-right: 1px solid #c0cfe0; display: flex; flex-direction: column; justify-content: space-between; text-align: center; }
.group + .group { margin-left: -1px; padding-left: 1px; }
.group small { font-size: 5px; line-height: 7px; color: #5b6e89; }
.items { display: flex; padding-top: 3px; }
.big { display: flex; flex-direction: column; align-items: center; gap: 2px; overflow: visible; flex: none; }
.big svg { width: 11px; height: 11px; flex: none; }
.big span { white-space: pre; font-size: 5px; line-height: 6px; }
.studio .off { color: #a3acb8; }
.off svg { filter: grayscale(1); opacity: .6; }
.studio .big.div { border-left: 1px solid #c0cfe0; }
.list { display: flex; flex-direction: column; gap: 2px; padding-left: 2px; flex: none; }
.list button { display: flex; align-items: center; gap: 1px; line-height: 6px; }
.list svg { width: 6px; height: 6px; flex: none; }
.meter { position: absolute; right: 2px; top: 10px; width: 3px; height: 26px; border-radius: 1px; background: linear-gradient(#999 40%, #22c064 40%, #6be57b); }
.work { display: grid; grid-template-columns: 101px 1fr; gap: 2px; border-top: 1px solid #8eb4de; background: #a9c8ea; }
aside { background: #fff; position: relative; }
.dock { display: flex; height: 9px; background: #c7d9ee; border-bottom: 1px solid #92b5dc; }
.dock button { line-height: 8px; color: #546a8a; }
.studio .dock button { padding: 0 3px; border-right: 1px solid #8fb0d6; }
.studio .dock .on { background: #dfeafa; font-weight: bold; color: #1d2f4d; }
.pins { margin: 0 3px 0 auto; }
.tree { list-style: none; font: 5px/9px "Liberation Mono", monospace; color: #222; padding-top: 1px; }
.tree li { display: flex; align-items: center; height: 9px; padding-left: 2px; gap: 2px; white-space: nowrap; }
.tree li i { width: 4px; font-style: normal; color: #999; font-size: 4px; }
.tree svg { width: 7px; height: 7px; flex: none; }
.tree .root i { display: none; }
.tree .head { display: flex; min-height: 0; height: 8px; background: none; padding: 0 0 0 2px; text-decoration: underline; color: #888; }
.tree .picked { margin-left: 7px; padding-left: 0; gap: 2px; width: 53px; background: #d6e4f7; box-shadow: inset 0 0 0 1px #9db9de; }
.tree .picked i { display: none; }
.main { display: flex; flex-direction: column; min-width: 0; }
.scene { position: relative; background: linear-gradient(#d7e8ff, #c3d3e8 55%, #aabfd4); }
.world { display: block; width: 100%; height: 235px; }
.studio-restart .world { height: 236px; }
.world .top { fill: #999892; stroke: #555; }
.world .rail { fill: #2b2b29; }
.world .edge { fill: none; stroke: #444; stroke-width: 1; }
.world.blue .top { fill: #7572ae; stroke: #fff; }
.world.blue .rail { fill: #211e5e; }
.world.blue .edge { stroke: #2c2970; }
.gizmo { position: absolute; left: 13px; bottom: 3px; }
.tools { position: absolute; left: 8px; top: 9px; display: flex; gap: 6px; }
.tools div { display: flex; gap: 3px; }
.tools svg { width: 9px; height: 9px; opacity: .45; }
.tools .solid { opacity: 1; }
.tools.second { top: 21px; }
.output { border-top: 2px solid #a9c8ea; }
.dock.out { height: 10px; }
.table { display: flex; background: #fff; font-family: "Liberation Mono", monospace; color: #222; }
.table table { flex: 1; border-collapse: collapse; table-layout: fixed; width: 100%; margin-top: 1px; }
th, td { padding: 0 2px; font-weight: normal; text-align: left; height: 7px; line-height: 7px; white-space: nowrap; }
.table th { height: 9px; border-right: 1px solid #e3e3e3; }
.table th:first-child { width: 285px; }
.table th:nth-child(2) { width: 67px; }
.table th:nth-child(3) { width: 67px; }
.table th:last-child { border-right: 0; }
.table select { appearance: none; border: 0; background: #eee; width: 64px; height: 8px; padding: 0; vertical-align: top; }
.table b { display: inline-block; width: 5px; height: 5px; line-height: 5px; border-radius: 50%; background: #d6e4fa; color: #2458b5; text-align: center; margin-right: 1px; }
.scroll { width: 7px; background: #f0f0f0; display: flex; flex-direction: column; justify-content: space-between; align-items: center; }
.scroll i { width: 6px; height: 17px; background: #c4c4c4; margin-top: 20px; }
.statusbar { display: flex; justify-content: flex-end; align-items: stretch; height: 9px; line-height: 8px; background: linear-gradient(#d1dfee, #b5c8de); border-top: 1px solid #9eb9d8; }
.statusbar span { padding: 0 2px; border-right: 1px solid #a7bcd5; white-space: nowrap; }
.statusbar .time { width: 53px; }
.statusbar .snap { width: 76px; }
.statusbar .ucs { width: 33px; }
.statusbar output { width: 81px; background: #fff; font-family: "Liberation Mono", monospace; color: #222; margin-right: 3px; }
.statusbar strong { width: 51px; background: #31a865; color: #10331f; font-weight: normal; text-align: center; white-space: nowrap; }
.cstatus { position: absolute; right: 0; bottom: 9px; width: 186px; height: 73px; background: #fff; border-left: 1px solid #9eb9d8; }
.cstatus p { display: flex; justify-content: space-between; padding: 0 2px 0 3px; background: #c7d9ee; line-height: 7px; }
.cstatus table { width: 100%; border-collapse: collapse; table-layout: fixed; font-family: "Liberation Mono", monospace; color: #222; }
.cstatus th, .cstatus td { height: 9px; line-height: 9px; }
.cstatus th { border-right: 1px solid #ddd; }
.cstatus th:first-child { width: 70px; }
.cstatus th:nth-child(2) { width: 56px; }
.cstatus .sect { color: #2746a0; font: 6px/9px "Open Sans", sans-serif; padding-left: 5px; }
.menu { position: absolute; z-index: 2; left: 45px; top: 31px; width: 67px; padding: 1px; background: #fff; border: 1px solid #a5b3c5; display: flex; flex-direction: column; }
.menu button { display: flex; align-items: center; height: 10px; gap: 5px; color: #34435c; }
.menu svg { width: 7px; height: 7px; flex: none; }
.menu kbd { margin-left: auto; font: inherit; }
.studio .menu button { padding: 0 8px 0 1px; }
.studio .menu .hot { background: #ffe07a; }
.menu .bold { font-weight: bold; }
.menu hr { margin: 0; border: 0; height: 1px; background: #bbb; }
</style>
